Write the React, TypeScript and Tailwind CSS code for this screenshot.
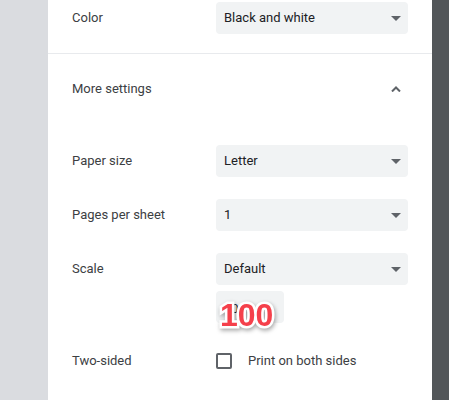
import { ReactNode } from 'react'

function Arrow() {
  return (
    <svg width="10" height="5" viewBox="0 0 10 5" className="mr-[7px]">
      <path d="M0 0 L10 0 L5 5 Z" fill="#5f6368" />
    </svg>
  )
}

function Select({ value }: { value: string }) {
  return (
    <div className="flex h-8 w-[192px] items-center justify-between rounded-[4px] bg-[#f1f3f4] pl-2">
      <span className="text-[13px] text-[#202124]">{value}</span>
      <Arrow />
    </div>
  )
}

function Row({ label, children, className = '' }: { label: string; children: ReactNode; className?: string }) {
  return (
    <div className={`flex items-center ${className}`}>
      <div className="w-[168px] shrink-0 pl-6 text-[13px] text-[#3c4043]">{label}</div>
      {children}
    </div>
  )
}

function App() {
  return (
    <div className="flex h-[400px] w-[449px] overflow-hidden font-['Roboto',sans-serif]">
      <div className="w-[48px] shrink-0 bg-[#dadce0]" />

      <div className="w-[384px] shrink-0 bg-white">
        <Row label="Color" className="mt-[2px]">
          <Select value="Black and white" />
        </Row>

        <div className="mt-[19px] border-t border-[#e8eaed]" />

        <div className="flex h-[70px] items-center justify-between pl-6 pr-[31px]">
          <span className="text-[13px] text-[#3c4043]">More settings</span>
          <svg width="10" height="6" viewBox="0 0 10 6">
            <path d="M1 5.5 L5 1.5 L9 5.5" fill="none" stroke="#5f6368" strokeWidth="2" />
          </svg>
        </div>

        <Row label="Paper size" className="mt-[21px]">
          <Select value="Letter" />
        </Row>

        <Row label="Pages per sheet" className="mt-[22px]">
          <Select value="1" />
        </Row>

        <Row label="Scale" className="mt-[22px]">
          <Select value="Default" />
        </Row>

        <div className="mt-[6px] pl-[168px]">
          <div className="relative h-8 w-[68px] rounded-[4px] bg-[#f1f3f4]">
            <span className="absolute left-2 top-[8px] text-[13px] text-[#202124]">100</span>
            <span className="absolute left-[4px] top-[8px] font-['Liberation_Sans',sans-serif] text-[32px] font-bold leading-[32px] text-[#f5404b] [-webkit-text-stroke:5px_white] [paint-order:stroke_fill] drop-shadow-[1px_2px_2px_rgba(0,0,0,0.35)]">
              100
            </span>
          </div>
        </div>

        <Row label="Two-sided" className="mt-[22px] h-8">
          <div className="flex items-center">
            <div className="h-4 w-4 rounded-[2px] border-2 border-[#5f6368]" />
            <span className="ml-4 text-[13px] text-[#3c4043]">Print on both sides</span>
          </div>
        </Row>
      </div>

      <div className="flex-1 bg-[#525659]" />
    </div>
  )
}

export default App
